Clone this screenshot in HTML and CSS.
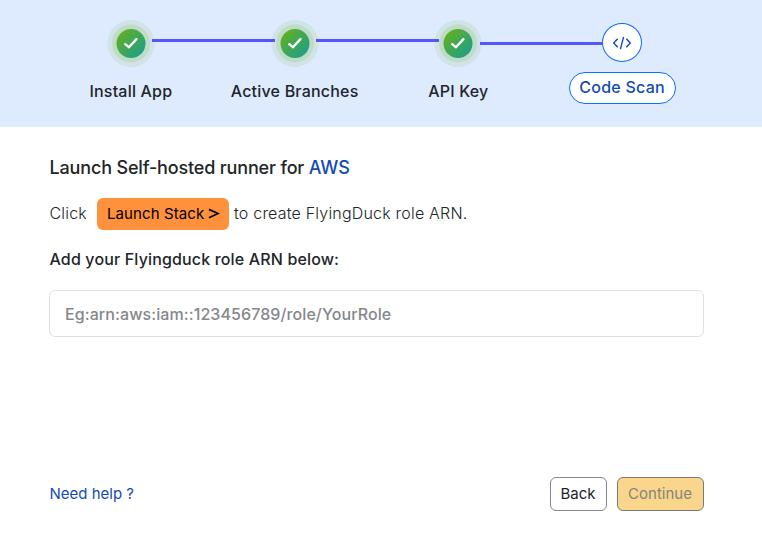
FILE: index.html
```html
<!DOCTYPE html>
<html lang="en">
<head>
<meta charset="utf-8">
<title>FlyingDuck setup</title>
<link rel="stylesheet" href="styles.css">
</head>
<body>
<svg width="0" height="0" class="defs" aria-hidden="true">
  <defs>
    <linearGradient id="done" x1="0" y1="0" x2="1" y2="1">
      <stop offset="0.1" stop-color="#62b01e"/>
      <stop offset="0.9" stop-color="#1d9f8c"/>
    </linearGradient>
    <symbol id="check" viewBox="0 0 48 48">
      <circle cx="24" cy="24.5" r="23.6" fill="#62b01e" fill-opacity="0.11"/>
      <circle cx="24" cy="24.5" r="19" fill="#62b01e" fill-opacity="0.14"/>
      <circle cx="24" cy="24.5" r="14.5" fill="url(#done)"/>
      <path d="M18.2 25.2L21.9 28.2L29.4 20.1" fill="none" stroke="#fff" stroke-width="2.3" stroke-linecap="round"/>
    </symbol>
  </defs>
</svg>
<header class="steps">
  <div class="step linked"><svg class="badge"><use href="#check"/></svg><span class="label">Install App</span></div>
  <div class="step linked"><svg class="badge"><use href="#check"/></svg><span class="label">Active Branches</span></div>
  <div class="step linked last-link"><svg class="badge"><use href="#check"/></svg><span class="label">API Key</span></div>
  <div class="step current">
    <span class="code-icon"><svg width="20" height="14" viewBox="0 0 20 14" fill="none" stroke="#124bb3" stroke-width="1.4"><path d="M5.7 2.7L1.7 7L5.7 11.3M14.3 2.7L18.3 7L14.3 11.3M11.6 .9L8.4 13.1"/></svg></span>
    <span class="pill">Code Scan</span>
  </div>
</header>
<main class="content">
  <h1 class="title">Launch Self-hosted runner for <span class="accent">AWS</span></h1>
  <p class="launch"><span>Click</span><button class="launch-btn">Launch Stack <svg width="12" height="12" viewBox="0 0 12 12" fill="none" stroke="#000" stroke-width="1.8"><path d="M1 1.2L10.3 5.5L1 9.8"/></svg></button><span>to create FlyingDuck role ARN.</span></p>
  <label class="field-label" for="arn">Add your Flyingduck role ARN below:</label>
  <input class="field" id="arn" placeholder="Eg:arn:aws:iam::123456789/role/YourRole">
</main>
<footer class="footer">
  <a class="help">Need help ?</a>
  <button class="btn back">Back</button>
  <button class="btn continue">Continue</button>
</footer>
</body>
</html>
```
FILE: styles.css
```css
* { box-sizing: border-box; }
body {
  margin: 0;
  height: 540px;
  display: flex;
  flex-direction: column;
  background: #fff;
  color: #212529;
  font-family: Inter, "Liberation Sans", sans-serif;
  font-size: 16px;
  overflow: hidden;
}
.defs { position: absolute; }
button, input { font: inherit; margin: 0; }
.steps {
  display: grid;
  grid-template-columns: repeat(4, 1fr);
  height: 127px;
  padding: 19px 58px 0 49px;
  background: #deebff;
}
.step {
  position: relative;
  display: flex;
  flex-direction: column;
  align-items: center;
}
.badge { width: 48px; height: 48px; overflow: visible; }
.badge use { overflow: visible; }
.label { margin-top: 14px; line-height: 20px; font-weight: 500; letter-spacing: .2px; }
.linked::after {
  content: "";
  position: absolute;
  z-index: 1;
  top: 20px;
  left: 103px;
  width: 123px;
  height: 3px;
  background: #5156fd;
}
.last-link::after { top: 23px; }
.current { padding-top: 4px; }
.code-icon {
  display: flex;
  align-items: center;
  justify-content: center;
  width: 40px;
  height: 39px;
  border: 1px solid #0d6efd;
  border-radius: 50%;
  background: #fff;
}
.pill {
  width: 107px;
  margin-top: 10px;
  height: 32px;
  border: 1px solid #0d6efd;
  border-radius: 16px;
  background: #fff;
  color: #124bb3;
  font-weight: 500;
  line-height: 29px;
  letter-spacing: .25px;
  text-align: center;
}
.content { padding: 29px 58px 0 49px; }
.title { margin: 0; font-size: 18px; font-weight: 500; line-height: 24px; letter-spacing: -.16px; padding-left: .5px; }
.accent { color: #124bb3; }
.launch {
  display: flex;
  align-items: center;
  height: 32px;
  margin: 18px 0 0;
  padding-left: .5px;
  font-weight: 300;
  letter-spacing: .2px;
}
.launch span { padding-bottom: 2px; }
.launch-btn {
  display: flex;
  align-items: center;
  gap: 4px;
  width: 132px;
  height: 32px;
  margin: 0 5px 0 10px;
  padding: 0 9px 1px 10px;
  border: 0;
  border-radius: 6px;
  background: #ff913c;
  color: #000;
  font-size: 15px;
  font-weight: 400;
  letter-spacing: .1px;
  white-space: nowrap;
}
.field-label { display: block; margin-top: 19px; padding-left: .5px; line-height: 20px; font-weight: 500; letter-spacing: .15px; }
.field {
  display: block;
  width: 100%;
  height: 47px;
  margin-top: 21px;
  padding: 0 15px;
  border: 1px solid #dee2e6;
  border-radius: 6px;
  font-weight: 500;
  letter-spacing: .09px;
}
.field::placeholder { color: #84878c; opacity: 1; }
.footer {
  display: flex;
  align-items: center;
  gap: 10px;
  margin-top: auto;
  padding: 0 58px 29px 49px;
  font-size: 15px;
}
.help { margin-right: auto; padding: 0 0 2px .5px; color: #124bb3; }
.btn { height: 34px; padding: 0 1px 2px 0; border: 1px solid #84849c; border-radius: 6px; }
.back { width: 57px; background: #fff; color: #212529; }
.continue { width: 87px; border-color: #777b76; background: #fad68c; color: #85857a; }
```
